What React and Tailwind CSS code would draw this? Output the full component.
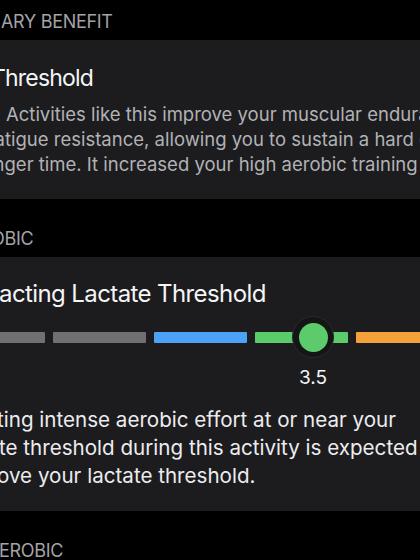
const segments = [
  { color: "bg-[#707072]" },
  { color: "bg-[#707072]" },
  { color: "bg-[#4ca2f6]" },
  { color: "bg-[#5bcb6b]" },
  { color: "bg-[#f5a13a]" },
];

function SectionHeader({ children, className = "" }) {
  return (
    <div
      className={
        "whitespace-nowrap text-[18px] leading-[22px] tracking-[-0.3px] text-[#a3a3a8] " + className
      }
    >
      {children}
    </div>
  );
}

function ScaleBar() {
  return (
    <div className="relative mt-[7px] h-[42px]">
      <div className="flex h-[42px] items-center gap-2 ml-[-48px]">
        {segments.map((s, i) => (
          <div key={i} className={"h-[11px] w-[93px] shrink-0 rounded-[1px] " + s.color} />
        ))}
      </div>
      {/* current value marker */}
      <div className="absolute left-[292px] top-0 flex h-[42px] w-[42px] items-center justify-center rounded-full border border-[#29292b] bg-[#151516]">
        <div className="h-[29px] w-[29px] rounded-full bg-[#5bcb6b]" />
      </div>
    </div>
  );
}

export default function App() {
  return (
    <div className="h-[560px] w-[420px] overflow-hidden bg-black text-white [font-family:Inter,sans-serif]">
      <SectionHeader className="h-[40px] pt-[11px] pl-[1px]">ARY BENEFIT</SectionHeader>

      <div className="h-[159px] bg-[#1c1c1e] pt-[24px]">
        <div className="ml-[-9px] whitespace-nowrap text-[23px] leading-[28px] tracking-[-0.8px] text-[#f5f5f7]">
          Threshold
        </div>
        <div className="mt-[10px] whitespace-nowrap text-[18.5px] leading-[25px] text-[#b2b2b6]">
          <div className="ml-[6px]">Activities like this improve your muscular endurance and</div>
          <div className="ml-[-12px]">fatigue resistance, allowing you to sustain a hard effort for a</div>
          <div className="ml-[-22px]">longer time. It increased your high aerobic training load.</div>
        </div>
      </div>

      <SectionHeader className="h-[58px] pt-[29px] ml-[-9px]">OBIC</SectionHeader>

      <div className="h-[254px] bg-[#1c1c1e] pt-[22px]">
        <div className="ml-[-1px] whitespace-nowrap text-[24px] leading-[30px] tracking-[-0.6px] text-[#f5f5f7]">
          acting Lactate Threshold
        </div>
        <ScaleBar />
        <div className="mt-[8px] ml-[283px] w-[60px] text-center text-[19px] leading-[24px] text-[#f5f5f7]">
          3.5
        </div>
        <div className="mt-[16px] whitespace-nowrap text-[20.6px] leading-[28px] text-[#ececf0]">
          <div className="ml-[-3px]">ting intense aerobic effort at or near your</div>
          <div className="ml-[-1px]">te threshold during this activity is expected</div>
          <div className="ml-[-3px]">ove your lactate threshold.</div>
        </div>
      </div>

      <SectionHeader className="pt-[29px] ml-[-1px]">EROBIC</SectionHeader>
    </div>
  );
}
